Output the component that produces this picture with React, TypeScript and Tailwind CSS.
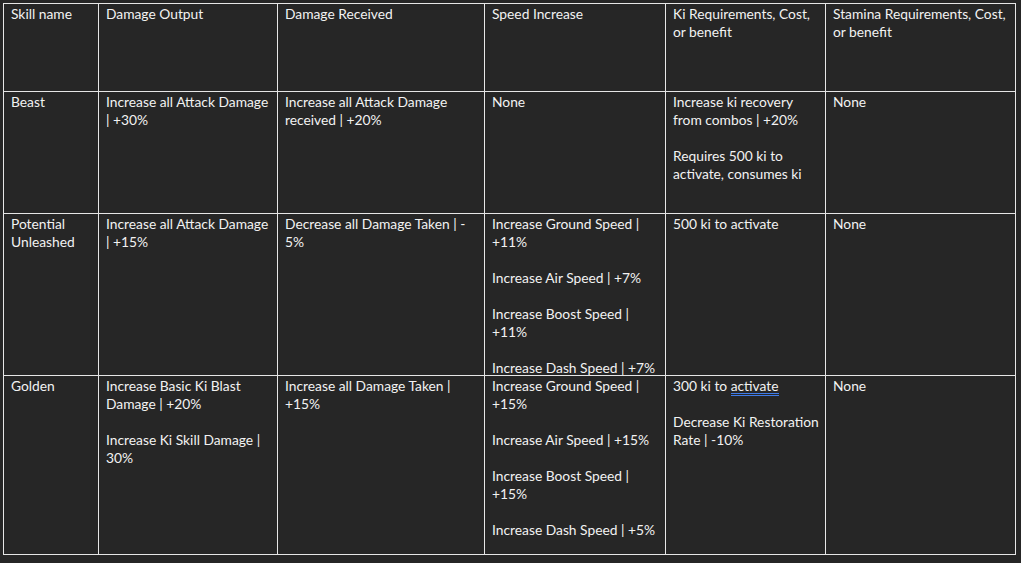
import React from "react";

type Cell = (string | React.ReactNode)[];

const headers: Cell[] = [
  ["Skill name"],
  ["Damage Output"],
  ["Damage Received"],
  ["Speed Increase"],
  ["Ki Requirements, Cost,", "or benefit"],
  ["Stamina Requirements, Cost,", "or benefit"],
];

const rows: { height: string; cells: Cell[] }[] = [
  {
    height: "h-[122px]",
    cells: [
      ["Beast"],
      ["Increase all Attack Damage", "| +30%"],
      ["Increase all Attack Damage", "received | +20%"],
      ["None"],
      ["Increase ki recovery", "from combos | +20%", "", "Requires 500 ki to", "activate, consumes ki"],
      ["None"],
    ],
  },
  {
    height: "h-[162px]",
    cells: [
      ["Potential", "Unleashed"],
      ["Increase all Attack Damage", "| +15%"],
      ["Decrease all Damage Taken | -", "5%"],
      [
        "Increase Ground Speed |",
        "+11%",
        "",
        "Increase Air Speed | +7%",
        "",
        "Increase Boost Speed |",
        "+11%",
        "",
        "Increase Dash Speed | +7%",
      ],
      ["500 ki to activate"],
      ["None"],
    ],
  },
  {
    height: "h-[179px]",
    cells: [
      ["Golden"],
      ["Increase Basic Ki Blast", "Damage | +20%", "", "Increase Ki Skill Damage |", "30%"],
      ["Increase all Damage Taken |", "+15%"],
      [
        "Increase Ground Speed |",
        "+15%",
        "",
        "Increase Air Speed | +15%",
        "",
        "Increase Boost Speed |",
        "+15%",
        "",
        "Increase Dash Speed | +5%",
      ],
      [
        <span key="a">
          300 ki to{" "}
          <span className="inline-block leading-[15px] border-b-[3px] border-double border-[#3f7be8]">activate</span>
        </span>,
        "",
        "Decrease Ki Restoration",
        "Rate | -10%",
      ],
      ["None"],
    ],
  },
];

const widths = ["w-[95px]", "w-[179px]", "w-[207px]", "w-[181px]", "w-[160px]", "w-[190px]"];

function Lines({ lines }: { lines: Cell }) {
  // negative bottom margin: a full cell may run into the border, like Word does
  return (
    <div className="-mb-[4px]">
      {lines.map((l, i) => (
        <div key={i} className="h-[18px] pt-[1px] whitespace-nowrap">
          {l === "" ? "\u00a0" : l}
        </div>
      ))}
    </div>
  );
}

export default function App() {
  return (
    <div className="w-[1021px] h-[563px] bg-[#262626] pl-[3px] pt-[3px] overflow-hidden font-['Lato','Open_Sans',sans-serif] text-[13.8px] leading-[18px] text-[#f2f2f2]">
      <table className="table-fixed border-collapse w-[1012px]">
        <colgroup>
          {widths.map((w, i) => (
            <col key={i} className={w} />
          ))}
        </colgroup>
        <tbody>
          <tr className="h-[88px]">
            {headers.map((h, i) => (
              <td key={i} className="border border-[#e6e6e6] align-top pl-[7px] pr-1 py-0">
                <Lines lines={h} />
              </td>
            ))}
          </tr>
          {rows.map((r, ri) => (
            <tr key={ri} className={r.height}>
              {r.cells.map((c, ci) => (
                <td key={ci} className="border border-[#e6e6e6] align-top pl-[7px] pr-1 py-0">
                  <Lines lines={c} />
                </td>
              ))}
            </tr>
          ))}
        </tbody>
      </table>
    </div>
  );
}
